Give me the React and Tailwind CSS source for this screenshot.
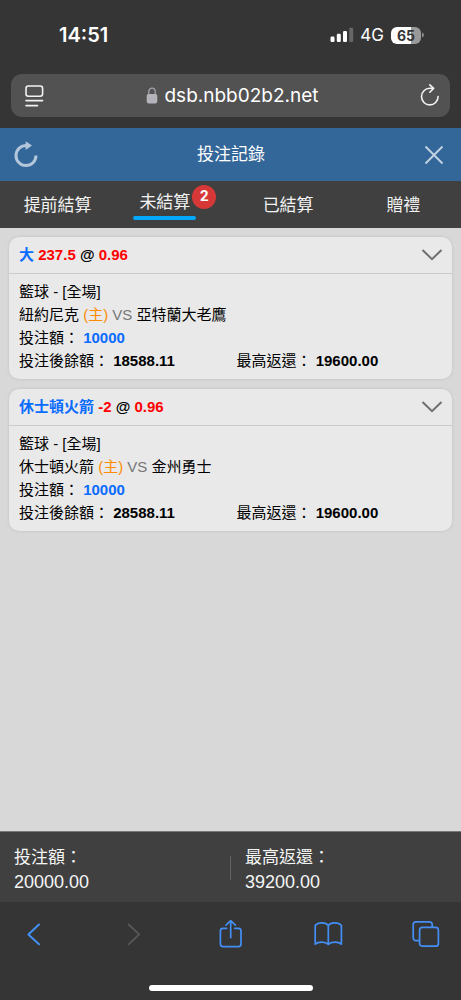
import React, { useState } from 'react'

const TABS = [
  { id: 'early', label: '提前結算' },
  { id: 'open', label: '未結算', count: 2 },
  { id: 'settled', label: '已結算' },
  { id: 'bonus', label: '贈禮' },
]

const BETS = [
  {
    id: 1,
    pick: '大',
    line: '237.5',
    odds: '0.96',
    league: '籃球 - [全場]',
    home: '紐約尼克',
    away: '亞特蘭大老鷹',
    stake: '10000',
    balance: '18588.11',
    payout: '19600.00',
  },
  {
    id: 2,
    pick: '休士頓火箭',
    line: '-2',
    odds: '0.96',
    league: '籃球 - [全場]',
    home: '休士頓火箭',
    away: '金州勇士',
    stake: '10000',
    balance: '28588.11',
    payout: '19600.00',
  },
]

function StatusBar() {
  return (
    <div className="flex items-center justify-between pt-5 pb-6 pl-[59px] pr-9 font-['Inter',sans-serif] text-white">
      <span className="text-[20px] leading-[30px] font-semibold">14:51</span>
      <div className="flex items-center">
        <svg width="24" height="16" viewBox="0 0 24 16" fill="#fff">
          <rect x="0.5" y="9.5" width="4" height="5.5" rx="1.2" />
          <rect x="6.8" y="6.8" width="4" height="8.2" rx="1.2" />
          <rect x="13" y="4" width="4" height="11" rx="1.2" />
          <rect x="19.2" y="0.8" width="4" height="14.2" rx="1.2" fill="#666" />
        </svg>
        <span className="ml-[6px] text-[17px] leading-[30px]">4G</span>
        <div className="ml-[7px] flex h-[17px] w-[30px] items-center justify-center rounded-[6px] bg-linear-to-r from-white from-65% to-[#999] to-65% text-[14px] font-bold text-[#353535]">
          65
        </div>
        <svg width="3" height="6" viewBox="0 0 3 6" className="ml-px" fill="#8a8a8a">
          <path d="M0 0.5C2.6 1.2 2.6 4.8 0 5.5Z" />
        </svg>
      </div>
    </div>
  )
}

function AddressBar() {
  return (
    <div className="px-[11px] pb-[11px]">
      <div className="flex h-[43px] items-center justify-between rounded-[11px] bg-[#525252] pl-3 pr-[10px] text-white">
        <button type="button" aria-label="Page menu">
          <svg width="22" height="24" viewBox="0 0 22 24" fill="none" stroke="#f2f2f2" strokeWidth="1.6" strokeLinecap="round">
            <rect x="3" y="2" width="16.6" height="10.2" rx="2.4" />
            <path d="M3 16.6H19.6M3 21.6H14.6" />
          </svg>
        </button>
        <div className="flex items-center">
          <svg width="12" height="17" viewBox="0 0 12 17">
            <rect x="0.7" y="7" width="10.6" height="9.4" rx="1.8" fill="#b4b2ba" />
            <path d="M2.8 7.5V4.6a3.2 3.4 0 0 1 6.4 0V7.5" fill="none" stroke="#a4a2aa" strokeWidth="1.3" />
          </svg>
          <span className="ml-[6px] font-['Inter',sans-serif] text-[19px] leading-6">dsb.nbb02b2.net</span>
        </div>
        <button type="button" aria-label="Reload">
          <svg width="20" height="24" viewBox="0 0 20 24" fill="none" stroke="#f2f2f2" strokeWidth="1.6" strokeLinecap="round" strokeLinejoin="round">
            <path d="M18.1 12.6A8.3 8.3 0 1 1 9.8 4.3H13.2" />
            <path d="M9.8 0.8L13.6 4.4L9.8 8.2" />
          </svg>
        </button>
      </div>
    </div>
  )
}

function BetCard({ bet }) {
  return (
    <article className="rounded-[10px] bg-[#e9e9e9] shadow-[0_0_3px_rgba(0,0,0,0.12)]">
      <header className="flex h-[37px] items-center justify-between border-b border-[#cbcbcb] pl-[10px] pr-[9px]">
        <h2 className="font-bold">
          <span className="text-[#0a6cff]">{bet.pick}</span> <span className="text-[#ff0000]">{bet.line}</span> @{' '}
          <span className="text-[#ff0000]">{bet.odds}</span>
        </h2>
        <button type="button" aria-label="展開">
          <svg width="22" height="14" viewBox="0 0 22 14" fill="none" stroke="#6e6e6e" strokeWidth="2">
            <path d="M1.5 2L11 11.2L20.5 2" />
          </svg>
        </button>
      </header>
      <div className="px-[10px] pt-[6px] pb-[7px] leading-[23px]">
        <p>{bet.league}</p>
        <p>
          {bet.home} <span className="text-[#ff8c00]">(主)</span> <span className="text-[#777]">VS</span> {bet.away}
        </p>
        <p>
          投注額： <b className="text-[#0a6cff]">{bet.stake}</b>
        </p>
        <div className="grid grid-cols-2 gap-3">
          <p>
            投注後餘額： <b>{bet.balance}</b>
          </p>
          <p>
            最高返還： <b>{bet.payout}</b>
          </p>
        </div>
      </div>
    </article>
  )
}

function BrowserNav() {
  return (
    <div className="pt-4 pb-[9px]">
      <nav className="flex items-center justify-between px-[18px] text-[#448ff5]">
        <button type="button" aria-label="Back">
          <svg width="32" height="32" viewBox="0 0 32 32" fill="none" stroke="currentColor" strokeWidth="2" strokeLinecap="round" strokeLinejoin="round">
            <path d="M21 6.5L10.4 16.4L21 26.3" />
          </svg>
        </button>
        <button type="button" aria-label="Forward" className="text-[#585858]">
          <svg width="32" height="32" viewBox="0 0 32 32" fill="none" stroke="currentColor" strokeWidth="1.8" strokeLinecap="round" strokeLinejoin="round">
            <path d="M12.6 6.5L23.2 16.4L12.6 26.3" />
          </svg>
        </button>
        <button type="button" aria-label="Share">
          <svg width="32" height="32" viewBox="0 0 32 32" fill="none" stroke="currentColor" strokeWidth="1.7" strokeLinecap="round" strokeLinejoin="round">
            <path d="M11.6 10.4H8a2.6 2.6 0 0 0-2.6 2.6V26a2.6 2.6 0 0 0 2.6 2.6H23.4a2.6 2.6 0 0 0 2.6-2.6V13a2.6 2.6 0 0 0-2.6-2.6H19.8" />
            <path d="M15.7 19.6V2.8M11 7.2L15.7 2.6L20.4 7.2" />
          </svg>
        </button>
        <button type="button" aria-label="Bookmarks">
          <svg width="32" height="32" viewBox="0 0 32 32" fill="none" stroke="currentColor" strokeWidth="1.7" strokeLinecap="round" strokeLinejoin="round">
            <path d="M15.3 7.6C12.8 4 5 4 2.2 7.6V26.2C5.2 23.4 12.5 23.4 15.3 26.4C18.1 23.4 25.4 23.4 28.4 26.2V7.6C25.6 4 17.8 4 15.3 7.6V26.2" />
          </svg>
        </button>
        <button type="button" aria-label="Tabs">
          <svg width="32" height="32" viewBox="0 0 32 32" fill="none" stroke="currentColor" strokeWidth="1.7" strokeLinejoin="round">
            <rect x="8.6" y="9.4" width="18.8" height="18.8" rx="2.8" />
            <path d="M8.6 22.6H5a2.8 2.8 0 0 1-2.8-2.8V6.6a2.8 2.8 0 0 1 2.8-2.8H18.4a2.8 2.8 0 0 1 2.8 2.8V9.4" />
          </svg>
        </button>
      </nav>
      <div className="mx-auto mt-[35px] h-[6px] w-[164px] rounded-full bg-white" />
    </div>
  )
}

export default function App() {
  const [tab, setTab] = useState('open')

  return (
    <div className="flex min-h-screen flex-col bg-[#353535] font-['Liberation_Sans','Noto_Sans_CJK_TC',sans-serif] text-[15px] text-black">
      <StatusBar />
      <AddressBar />

      <header className="flex h-[53px] items-center justify-between bg-[#336699] pl-[14px] pr-[17px]">
        <button type="button" aria-label="重新整理">
          <svg width="24" height="28" viewBox="0 0 24 28">
            <path d="M22 14.6A10 10 0 1 1 12.5 4.6" fill="none" stroke="#b3c6da" strokeWidth="3" />
            <path d="M11.6 0.2L18 4.6L11.6 9Z" fill="#b3c6da" />
          </svg>
        </button>
        <h1 className="text-[17px] text-white">投注記錄</h1>
        <button type="button" aria-label="關閉">
          <svg width="20" height="20" viewBox="0 0 20 20" fill="none" stroke="#c2d1e0" strokeWidth="2">
            <path d="M1.5 1.5L18.5 18.5M18.5 1.5L1.5 18.5" />
          </svg>
        </button>
      </header>

      <nav className="grid h-[47px] grid-cols-4 bg-[#404040] text-[17px] text-[#f2f2f2]">
        {TABS.map((t) => (
          <button
            key={t.id}
            type="button"
            onClick={() => setTab(t.id)}
            className={`flex items-center justify-center ${tab === t.id ? 'pl-1' : 'pt-[3px]'}`}
          >
            <span className={tab === t.id ? 'flex flex-col items-center' : ''}>
              <span className={tab === t.id ? 'px-[6px] leading-[26px]' : ''}>{t.label}</span>
              {tab === t.id && <span className="h-1 w-full rounded-full bg-[#04a8fb]" />}
            </span>
            {t.count && (
              <span className="-ml-1 mb-4 flex h-6 w-6 items-center justify-center rounded-full bg-[#d63838] font-['Roboto',sans-serif] text-[15px] font-bold text-white">
                {t.count}
              </span>
            )}
          </button>
        ))}
      </nav>

      <main className="flex flex-1 flex-col gap-[10px] bg-[#d8d8d8] px-[9px] py-[9px]">
        {BETS.map((bet) => (
          <BetCard key={bet.id} bet={bet} />
        ))}
      </main>

      <footer className="flex items-center border-t border-[#777] bg-[#404040] pt-[14px] pb-2 text-[#f5f5f5]">
        <div className="flex-1 pl-[14px]">
          <p className="text-[17px] leading-6">投注額：</p>
          <p className="text-[18px] leading-6">20000.00</p>
        </div>
        <div className="mb-1 h-6 w-px bg-[#636363]" />
        <div className="flex-1 pl-[14px]">
          <p className="text-[17px] leading-6">最高返還：</p>
          <p className="text-[18px] leading-6">39200.00</p>
        </div>
      </footer>

      <BrowserNav />
    </div>
  )
}
